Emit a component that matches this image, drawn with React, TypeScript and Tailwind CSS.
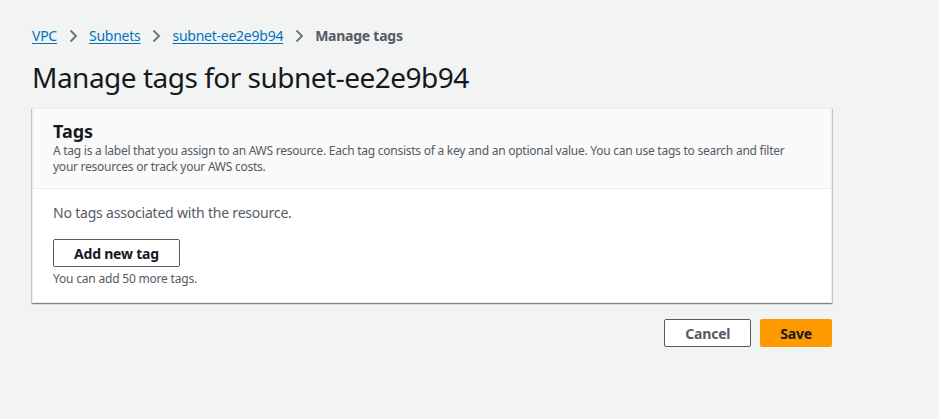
import React from 'react';

const Chevron = () => (
    <svg width="16" height="16" viewBox="0 0 16 16" className="mx-[8px] text-[#687078]">
        <path d="M5.5 2.5l5.5 5.5-5.5 5.5" fill="none" stroke="currentColor" strokeWidth="1.8" />
    </svg>
);

const App = () => {
    const crumbs = ['VPC', 'Subnets', 'subnet-ee2e9b94'];

    return (
        <div
            className="min-h-[419px] bg-[#f2f3f3] px-[32px] pt-[25px] text-[#16191f]"
            style={{ fontFamily: '"Noto Sans", "Open Sans", Arial, sans-serif' }}
        >
            {/* Breadcrumbs */}
            <nav className="flex items-center text-[14px] leading-[22px] tracking-[-0.25px]">
                {crumbs.map((c) => (
                    <React.Fragment key={c}>
                        <a href="#" className="text-[#0073bb] underline underline-offset-2">
                            {c}
                        </a>
                        <Chevron />
                    </React.Fragment>
                ))}
                <span className="font-bold text-[#545b64]">Manage tags</span>
            </nav>

            <h1 className="mt-[12px] text-[28px] leading-[36px] font-normal tracking-[-0.5px]">
                Manage tags for subnet-ee2e9b94
            </h1>

            {/* Tags card */}
            <div className="mt-[13px] w-[800px] bg-white border border-[#eaeded] shadow-[0_1px_1px_0_rgba(0,28,36,0.3),1px_1px_1px_0_rgba(0,28,36,0.15),-1px_1px_1px_0_rgba(0,28,36,0.15)]">
                <div className="bg-[#fafafa] border-b border-[#eaeded] px-[20px] pt-[10px] pb-[13px]">
                    <h2 className="text-[18px] leading-[24px] font-bold">Tags</h2>
                    <p className="text-[12px] leading-[16px] text-[#545b64] tracking-[-0.25px]">
                        A tag is a label that you assign to an AWS resource. Each tag consists of a key and an optional
                        value. You can use tags to search and filter your resources or track your AWS costs.
                    </p>
                </div>
                <div className="px-[20px] pt-[13px] pb-[15px]">
                    <p className="text-[14px] leading-[22px] text-[#545b64] tracking-[-0.2px]">
                        No tags associated with the resource.
                    </p>
                    <button className="mt-[15px] h-[28px] px-[20px] border border-[#545b64] rounded-[2px] bg-white text-[14px] font-bold text-[#16191f] tracking-[-0.2px]">
                        Add new tag
                    </button>
                    <p className="mt-[4px] text-[12px] leading-[16px] text-[#545b64] tracking-[-0.2px]">
                        You can add 50 more tags.
                    </p>
                </div>
            </div>

            {/* Actions */}
            <div className="w-[800px] flex justify-end gap-[9px] mt-[16px]">
                <button className="h-[28px] px-[20px] border border-[#545b64] rounded-[2px] bg-white text-[14px] font-bold text-[#545b64] tracking-[-0.2px]">
                    Cancel
                </button>
                <button className="h-[28px] px-[20px] rounded-[2px] bg-[#ff9900] text-[14px] font-bold text-[#16191f] tracking-[-0.2px]">
                    Save
                </button>
            </div>
        </div>
    );
};

export default App;
